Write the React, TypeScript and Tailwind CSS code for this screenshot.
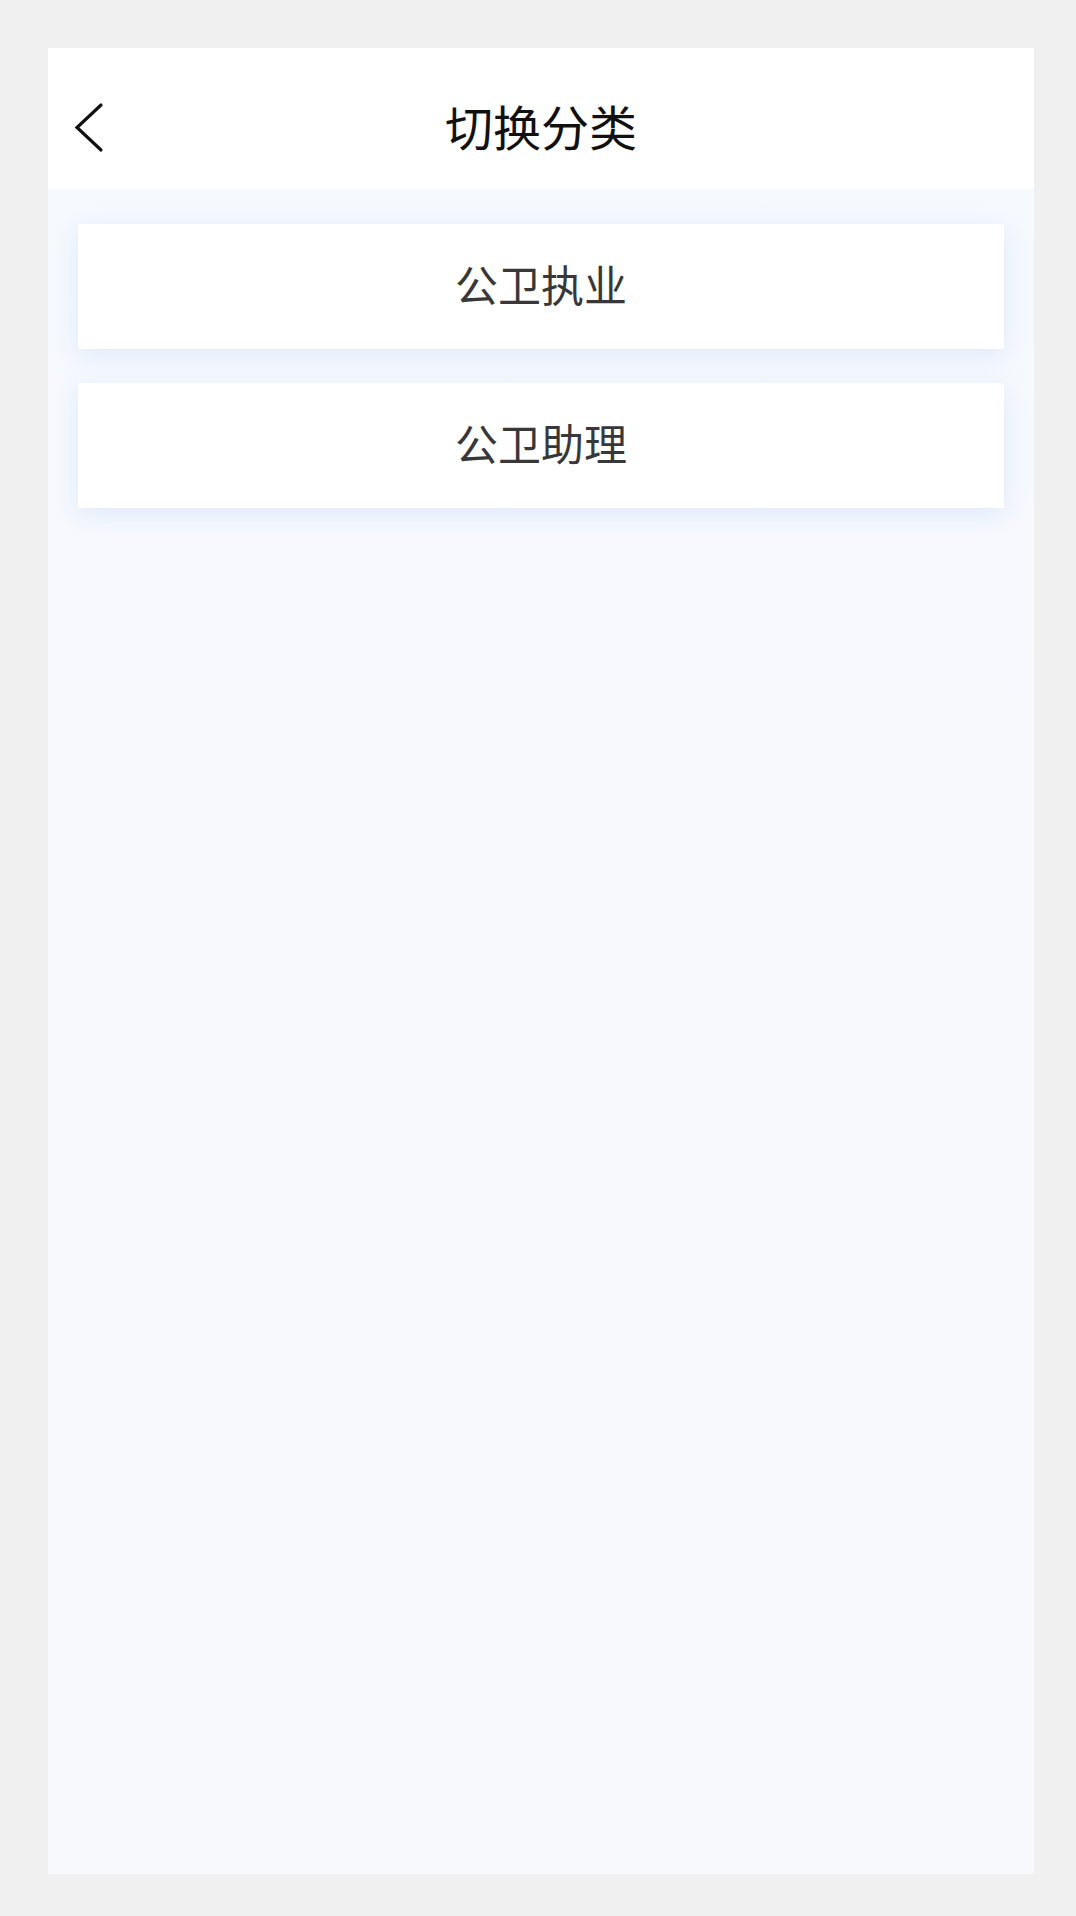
import React from "react";

const font = { fontFamily: '"Noto Sans CJK SC", "Noto Sans", sans-serif' };

export default function App() {
  const items = ["公卫执业", "公卫助理"];
  return (
    <div className="min-h-[1916px] w-full bg-[#f0f0f0] pt-[48px]" style={font}>
      <div className="ml-[48px] flex h-[1826px] w-[986px] flex-col bg-gradient-to-b from-[#f6f9fe] to-[#f8f9fc]">
        <div className="grid h-[141px] shrink-0 grid-cols-[1fr_auto_1fr] items-center bg-white pt-[17px]">
          <div className="flex items-center pl-[25px]">
            <svg width="32" height="52" viewBox="0 0 32 52" fill="none">
              <path d="M28 4 L4 26.5 L28 49" stroke="#111" strokeWidth="3.2" strokeLinecap="round" strokeLinejoin="miter" />
            </svg>
          </div>
          <div className="pb-[5px] text-[48px] leading-none text-[#111]">切换分类</div>
          <div />
        </div>
        <div className="flex flex-col gap-[34px] px-[30px] pt-[35px]">
          {items.map((t) => (
            <div
              key={t}
              className="flex h-[125px] items-center justify-center bg-white pb-[7px] text-[43px] leading-none text-[#383838] shadow-[0_6px_24px_rgba(190,212,245,0.42)]"
            >
              {t}
            </div>
          ))}
        </div>
      </div>
    </div>
  );
}
